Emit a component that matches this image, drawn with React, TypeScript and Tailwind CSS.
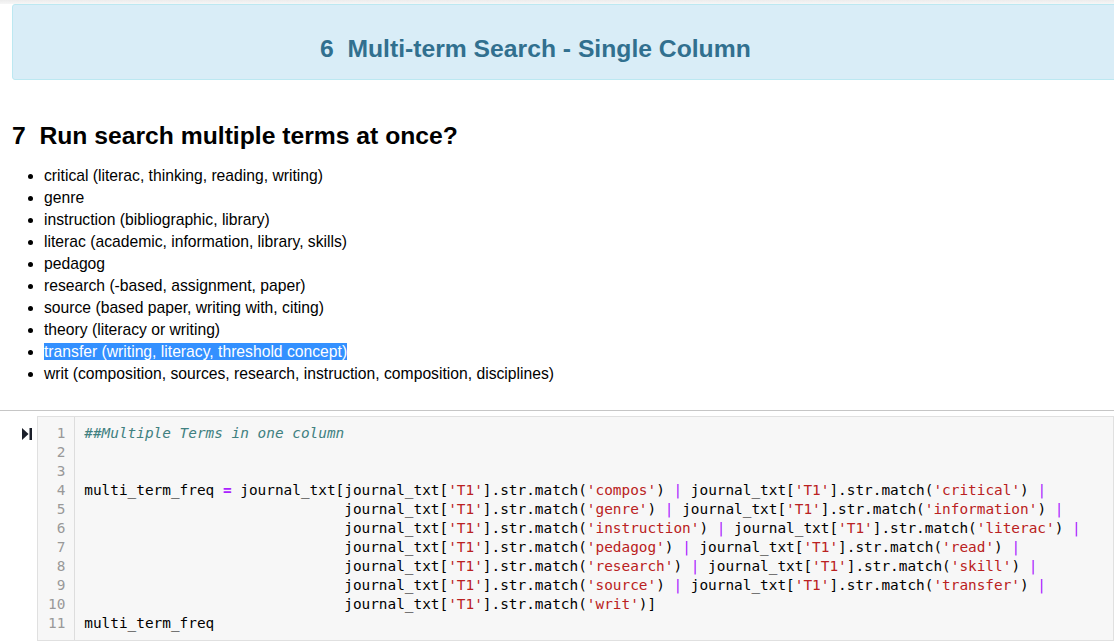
import React from "react";

const terms = [
  "critical (literac, thinking, reading, writing)",
  "genre",
  "instruction (bibliographic, library)",
  "literac (academic, information, library, skills)",
  "pedagog",
  "research (-based, assignment, paper)",
  "source (based paper, writing with, citing)",
  "theory (literacy or writing)",
  "transfer (writing, literacy, threshold concept)",
  "writ (composition, sources, research, instruction, composition, disciplines)",
];

const pad = " ".repeat(30);
const m = (s: string) => `journal_txt['T1'].str.match('${s}')`;

const codeLines = [
  "##Multiple Terms in one column",
  "",
  "",
  `multi_term_freq = journal_txt[${m("compos")} | ${m("critical")} |`,
  `${pad}${m("genre")} | ${m("information")} |`,
  `${pad}${m("instruction")} | ${m("literac")} |`,
  `${pad}${m("pedagog")} | ${m("read")} |`,
  `${pad}${m("research")} | ${m("skill")} |`,
  `${pad}${m("source")} | ${m("transfer")} |`,
  `${pad}${m("writ")}]`,
  "multi_term_freq",
];

// tiny python-ish highlighter: comments, strings, | and =
function Highlight({ line }: { line: string }) {
  if (line.startsWith("#")) {
    return <span className="italic text-[#408080]">{line}</span>;
  }
  const parts = line.split(/('[^']*'|\||=)/g);
  return (
    <>
      {parts.map((p, i) => {
        if (p.startsWith("'")) return <span key={i} className="text-[#ba2121]">{p}</span>;
        if (p === "|") return <span key={i} className="text-[#aa22ff]">{p}</span>;
        if (p === "=") return <span key={i} className="font-bold text-[#aa22ff]">{p}</span>;
        return <span key={i}>{p}</span>;
      })}
    </>
  );
}

export default function App() {
  return (
    <div
      className="w-[1114px] h-[643px] overflow-hidden bg-white text-black"
      style={{ fontFamily: '"Liberation Sans", Arial, sans-serif' }}
    >
      <div className="h-[4px] bg-gradient-to-b from-[#ececec] to-[#f6f6f6]" />

      {/* section header */}
      <div className="ml-[12px] w-[1130px] h-[76px] rounded-[3px] border border-[#bce8f1] bg-[#d9edf7] flex items-center pl-[307px] pt-[14px]">
        <h1 className="text-[24.7px] font-bold leading-[30px] text-[#31708f]">
          6&nbsp;&nbsp;Multi-term Search - Single Column
        </h1>
      </div>

      <div className="pl-[12px] pt-[41px]">
        <h2 className="text-[24.7px] font-bold leading-[30px]">7&nbsp;&nbsp;Run search multiple terms at once?</h2>
        <ul className="mt-[14px] pl-[32px] list-disc text-[15.7px] leading-[22px]">
          {terms.map((t, i) => (
            <li key={i}>
              {i === 8 ? <span className="bg-[#3390ff] text-white">{t}</span> : t}
            </li>
          ))}
        </ul>
      </div>

      <div className="mt-[25px] h-px bg-[#c6c6c6]" />

      {/* code cell */}
      <div className="mt-[5px] flex">
        <div className="w-[38px] flex justify-end pr-[5px] pt-[12px]">
          <svg width="10" height="12" viewBox="0 0 10 12">
            <path d="M0 0 L6.5 6 L0 12 Z" fill="#1b1f2a" />
            <rect x="7.5" y="0" width="2.5" height="12" fill="#1b1f2a" />
          </svg>
        </div>
        <div
          className="w-[1100px] flex border border-[#e0e0e0] bg-[#f7f7f7] py-[7px] text-[14.4px] leading-[19px]"
          style={{ fontFamily: '"DejaVu Sans Mono", "Liberation Mono", monospace' }}
        >
          <div className="w-[37px] border-r border-[#dddddd] pr-[9px] text-right text-[#999999] -my-[7px] py-[7px]">
            {codeLines.map((_, i) => (
              <div key={i}>{i + 1}</div>
            ))}
          </div>
          <div className="pl-[9px] whitespace-pre">
            {codeLines.map((l, i) => (
              <div key={i} className="h-[19px]">
                <Highlight line={l} />
              </div>
            ))}
          </div>
        </div>
      </div>
    </div>
  );
}
